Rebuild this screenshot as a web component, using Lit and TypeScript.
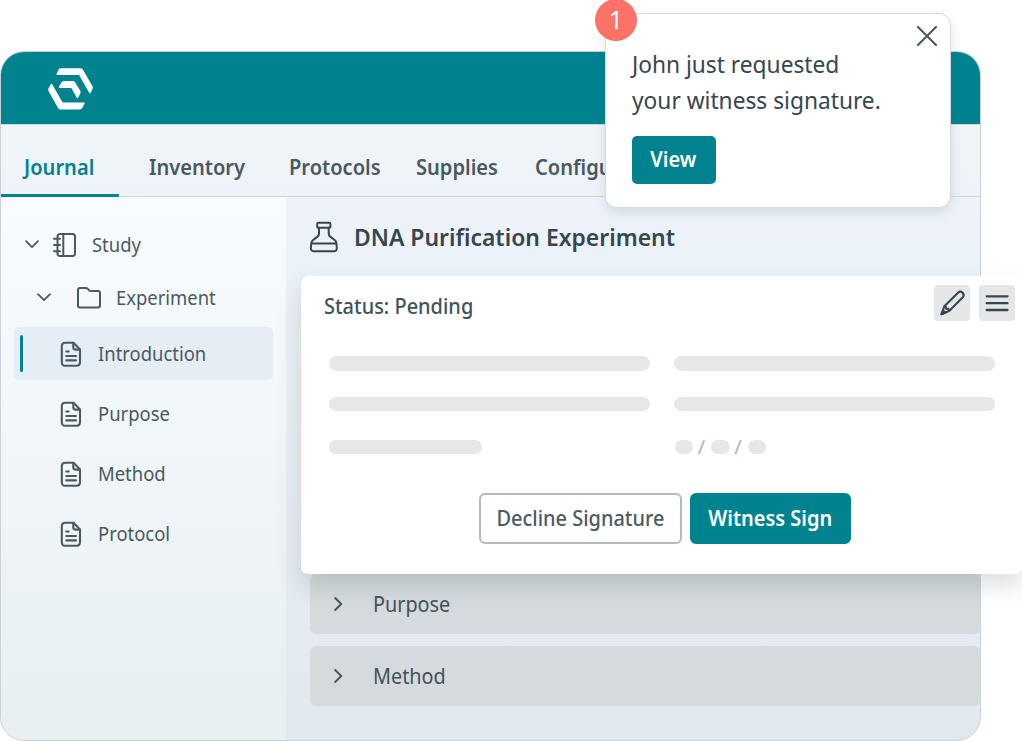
import { css, LitElement, html, svg } from 'lit';
import { customElement, property } from 'lit/decorators.js';
import { classMap } from 'lit/directives/class-map.js';

const icons: Record<string, unknown> = {
  logo: svg`<svg width="45" height="42" viewBox="0 0 45 42" stroke-width="1.6">
    <path d="M9.3 6.2L11.3 2Q11.9 1 13.1 1H32.4Q33.6 1 34.2 2L43.8 18.7Q44.4 19.7 43.8 20.7L42 24.5L31.5 6.2Z"/>
    <path d="M3.5 16.7L1.2 20.7Q.6 21.7 1.2 22.7L10.6 39.4Q11.2 40.7 12.4 40.7H31.8Q33 40.7 33.6 39.7L36 35.2H15.2Q14.1 35.2 13.5 34.2Z"/>
    <path d="M11.6 19.2L14.1 14.9Q14.6 13.8 15.8 13.8H24.8Q26 13.8 26.6 14.8L31.6 23.2Q32.1 24.2 31.6 25.2L29.4 29.4L24.4 20.2Q23.9 19.2 22.8 19.2Z"/>
  </svg>`,
  down: svg`<svg width="14" height="9" viewBox="0 0 14 9"><path d="M1 1.2L7 7.2L13 1.2"/></svg>`,
  right: svg`<svg width="9" height="14" viewBox="0 0 9 14"><path d="M1.2 1L7.2 7L1.2 13"/></svg>`,
  notebook: svg`<svg width="24" height="26" viewBox="0 0 24 26" stroke-width="2">
    <rect x="4.5" y="2" width="17.5" height="22" rx="2.5"/>
    <path d="M10.3 2V24M1 6.8H7M1 13H7M1 19.2H7"/>
  </svg>`,
  folder: svg`<svg width="26" height="24" viewBox="0 0 26 24" stroke-width="2">
    <path d="M2 4Q2 2 4 2H9.8Q11 2 11.6 2.7L13.2 4.4Q13.8 5 14.8 5H22Q24 5 24 7V19.5Q24 21.5 22 21.5H4Q2 21.5 2 19.5Z"/>
  </svg>`,
  file: svg`<svg width="22" height="26" viewBox="0 0 22 26" stroke-width="2.1">
    <path d="M5 1.8H13.5L20 8.4V21Q20 24.8 16.5 24.8H5.3Q1.8 24.8 1.8 21V5.3Q1.8 1.8 5 1.8Z"/>
    <path d="M13.3 1.8V6.6Q13.3 8.6 15.3 8.6H20M6.3 10.5H8.7M6.3 15H16M6.3 19.4H16"/>
  </svg>`,
  flask: svg`<svg width="28" height="32" viewBox="0 0 28 32" stroke-width="2">
    <rect x="7.2" y="1.7" width="13.2" height="5" rx="1"/>
    <path d="M9 6.7V12.5Q9 14.5 7.5 15.6L2.8 19.3Q1.5 20.3 1.3 22L.9 27Q.8 30.2 3.6 30.2H24.1Q26.9 30.2 26.8 27L26.4 22Q26.2 20.3 24.9 19.3L20.2 15.6Q18.7 14.5 18.7 12.5V6.7M1.5 22.6H26.2"/>
  </svg>`,
  pencil: svg`<svg width="36" height="36" viewBox="0 0 36 36" stroke-width="2.1">
    <path d="M7.5 29.2L10.4 21.2L24 7.7Q26.3 5.6 28.6 7.7Q30.8 10.2 28.6 12.5L15.1 26L7.5 29.2ZM10.4 21.2Q12.3 21.2 12.1 23.6Q15 23.6 15.1 26"/>
    <path d="M7.5 29.2L9 25.5L11.3 27.6Z" fill="currentColor"/>
  </svg>`,
  menu: svg`<svg width="36" height="36" viewBox="0 0 36 36" stroke-width="2.3"><path d="M7.7 11.3H28.5M7.7 18.2H28.5M7.7 25H28.5"/></svg>`,
  close: svg`<svg width="22" height="22" viewBox="0 0 22 22" stroke-width="2.2"><path d="M2 2L20 20M20 2L2 20"/></svg>`,
};

@customElement('app-icon')
export class AppIcon extends LitElement {
  @property() name = '';

  static styles = css`
    :host {
      display: block;
      flex: none;
    }
    svg {
      display: block;
      overflow: visible;
      fill: none;
      stroke: currentColor;
      stroke-linecap: round;
      stroke-linejoin: round;
    }
    :host([name='down']) svg,
    :host([name='right']) svg {
      stroke-width: 1.8;
    }
    :host([name='logo']) svg {
      fill: #fff;
      stroke: #fff;
    }
  `;

  render() {
    return html`${icons[this.name]}`;
  }
}

// slightly condensed labels, shared by all elements
const narrow = css`
  .text {
    display: inline-block;
    white-space: nowrap;
    transform: scaleX(0.95);
    transform-origin: left center;
  }
  .button .text {
    transform-origin: center;
  }
`;

@customElement('signature-card')
export class SignatureCard extends LitElement {
  static styles = [
    narrow,
    css`
      :host {
        display: flex;
        flex-direction: column;
        box-sizing: border-box;
        height: 298px;
        padding: 8px 7px 30px 23px;
        background: #fff;
        border-radius: 7px;
        color: #43525a;
        box-shadow: 0 12px 24px rgba(60, 80, 85, 0.18);
      }
      .top {
        display: flex;
        align-items: center;
        gap: 9px;
        height: 37px;
      }
      .status {
        flex: 1;
        font-size: 21px;
        font-weight: 500;
        line-height: 36px;
        padding-top: 6px;
      }
      .tool {
        border-radius: 4px;
        background: #e4e6e8;
        color: #37464e;
      }
      .fields {
        display: grid;
        grid-template-columns: 321px 321px;
        column-gap: 24px;
        grid-template-rows: 15px 14px 14px;
        row-gap: 26px;
        margin: 35px 0 0 5px;
      }
      .bar {
        border-radius: 8px;
        background: #e5e7e9;
      }
      .short {
        width: 153px;
        margin-top: 3px;
        height: 14px;
      }
      .date {
        display: flex;
        align-items: center;
        margin-top: 3px;
        padding-left: 0.5px;
        height: 14px;
      }
      .dot {
        width: 18.5px;
        height: 14px;
        border-radius: 7px;
        background: #e5e7e9;
      }
      .slash {
        width: 18px;
        padding-right: 1px;
        box-sizing: border-box;
        text-align: center;
        font-size: 20px;
        line-height: 14px;
        color: #a9b3b9;
      }
      .actions {
        display: flex;
        gap: 8px;
        margin-top: auto;
        margin-left: 155px;
      }
      .button {
        box-sizing: border-box;
        width: 203px;
        height: 51px;
        border: 2px solid #b1bbc3;
        border-radius: 6px;
        background: #fff;
        color: #4c5b64;
        font: 500 21px/47px 'Noto Sans', sans-serif;
        padding: 0;
      }
      .primary {
        width: 161px;
        border-color: #00838f;
        background: #00838f;
        color: #fff;
        font-weight: 600;
      }
      .primary .text {
        margin-left: -1px;
      }
    `,
  ];

  render() {
    return html`
      <div class="top">
        <div class="status"><span class="text">Status: Pending</span></div>
        <app-icon class="tool" name="pencil"></app-icon>
        <app-icon class="tool" name="menu"></app-icon>
      </div>
      <div class="fields">
        <div class="bar"></div>
        <div class="bar"></div>
        <div class="bar"></div>
        <div class="bar"></div>
        <div class="bar short"></div>
        <div class="date">
          <span class="dot"></span><span class="slash">/</span><span class="dot"></span
          ><span class="slash">/</span><span class="dot"></span>
        </div>
      </div>
      <div class="actions">
        <button class="button"><span class="text">Decline Signature</span></button>
        <button class="button primary"><span class="text">Witness Sign</span></button>
      </div>
    `;
  }
}

@customElement('request-toast')
export class RequestToast extends LitElement {
  static styles = [
    narrow,
    css`
      :host {
        display: block;
        box-sizing: border-box;
        width: 346px;
        height: 194.5px;
        padding: 32px 26px 0;
        border: 1.5px solid #d5dbdf;
        border-radius: 12px;
        background: #fff;
        box-shadow: 0 4px 12px rgba(60, 80, 95, 0.16);
      }
      .badge {
        position: absolute;
        left: -11px;
        top: -15px;
        width: 42px;
        height: 42px;
        border-radius: 50%;
        background: #fa7268;
        color: #fff;
        font-size: 25px;
        line-height: 41px;
        text-align: center;
      }
      .close {
        position: absolute;
        right: 12.5px;
        top: 11px;
        color: #4c5b64;
      }
      .message {
        font-size: 24px;
        line-height: 36px;
        color: #37464e;
      }
      .message .text {
        transform: scaleX(0.947);
      }
      .button {
        display: block;
        width: 84px;
        height: 48px;
        margin-top: 17.5px;
        padding: 0 1px 0 0;
        border: 0;
        border-radius: 5px;
        background: #00838f;
        color: #fff;
        font: 600 21px/47px 'Noto Sans', sans-serif;
      }
    `,
  ];

  render() {
    return html`
      <div class="badge">1</div>
      <app-icon class="close" name="close"></app-icon>
      <div class="message"><span class="text">John just requested<br />your witness signature.</span></div>
      <button class="button"><span class="text">View</span></button>
    `;
  }
}

@customElement('app-root')
export class AppRoot extends LitElement {
  @property() tab = 'Journal';
  @property() page = 'Introduction';

  static styles = [
    narrow,
    css`
      :host {
        display: block;
        position: relative;
        width: 1022px;
        height: 741px;
        overflow: hidden;
        background: #fff;
        font-family: 'Noto Sans', sans-serif;
        color: #4a5960;
      }
      .space {
        height: 51px;
      }
      .window {
        box-sizing: border-box;
        display: flex;
        flex-direction: column;
        width: 981px;
        height: 690px;
        border: 1.5px solid #cbd3d8;
        border-radius: 24px;
        overflow: hidden;
        background: linear-gradient(#f2f6fa, #ebf2f8 30%, #e1e8ef);
      }
      .header {
        box-sizing: border-box;
        flex: none;
        height: 72px;
        padding: 16px 0 0 47px;
        background: #00838f;
      }
      .tabs {
        box-sizing: border-box;
        flex: none;
        display: grid;
        grid-template-columns: 148px 139.5px 127.5px 118.5px auto;
        height: 73px;
        border-top: 1px solid #d3dade;
        border-bottom: 1.5px solid #cfd6da;
        font-size: 21px;
        font-weight: 600;
        line-height: 84px;
      }
      .tab {
        height: 72px;
      }
      .tab .text {
        transform: scaleX(0.956);
      }
      .tab.active {
        box-sizing: border-box;
        width: 118px;
        padding-left: 23px;
        border-bottom: 3px solid #00838f;
        color: #00838f;
      }
      .body {
        flex: 1;
        display: flex;
      }
      .sidebar {
        box-sizing: border-box;
        width: 284.5px;
        padding: 21px 13px 0;
        background: linear-gradient(#f8fcff, #f2f7fa 35%, #e7eff2);
        font-size: 19.5px;
      }
      .sidebar .text {
        transform: scaleX(0.945);
      }
      .row {
        display: flex;
        align-items: center;
        height: 53px;
      }
      .study {
        padding-left: 11px;
      }
      .study .icon {
        margin: 0 15px 0 14px;
      }
      .folder {
        padding-left: 23px;
      }
      .folder .icon {
        margin: 0 14px 0 25px;
      }
      .page {
        box-sizing: border-box;
        margin-bottom: 7px;
        padding-left: 6px;
        border-radius: 5px;
      }
      .page.active {
        background: #e6eef5;
        margin-top: 3px;
      }
      .mark {
        width: 3px;
        height: 37px;
        border-radius: 2px;
      }
      .active .mark {
        background: #00838f;
      }
      .page .icon {
        margin: 0 16px 0 37px;
      }
      .main {
        flex: 1;
        padding-left: 24px;
      }
      .heading {
        display: flex;
        align-items: center;
        gap: 16px;
        height: 79px;
        color: #37464e;
        font-size: 24px;
        font-weight: 600;
      }
      .heading .text {
        transform: scaleX(0.955);
      }
      .section {
        display: flex;
        align-items: center;
        gap: 30px;
        box-sizing: border-box;
        height: 60px;
        margin-bottom: 12px;
        padding-left: 24px;
        border-radius: 6px;
        background: #d4dadd;
        color: #43525a;
        font-size: 21px;
      }
      .section .text {
        transform: scaleX(0.943);
      }
      .sections {
        margin-top: 298px;
      }
      .card {
        position: absolute;
        left: 301px;
        top: 276px;
        width: 721px;
      }
      .toast {
        position: absolute;
        left: 605px;
        top: 13px;
      }
    `,
  ];

  render() {
    const tabs = ['Journal', 'Inventory', 'Protocols', 'Supplies', 'Configuration'];
    const pages = ['Introduction', 'Purpose', 'Method', 'Protocol'];
    return html`
      <div class="space"></div>
      <div class="window">
        <div class="header"><app-icon name="logo"></app-icon></div>
        <div class="tabs">
          ${tabs.map(
            (t) => html`
              <div class=${classMap({ tab: true, active: t === this.tab })} @click=${() => (this.tab = t)}>
                <span class="text">${t}</span>
              </div>
            `
          )}
        </div>
        <div class="body">
          <div class="sidebar">
            <div class="row study">
              <app-icon name="down"></app-icon>
              <app-icon class="icon" name="notebook"></app-icon>
              <span class="text">Study</span>
            </div>
            <div class="row folder">
              <app-icon name="down"></app-icon>
              <app-icon class="icon" name="folder"></app-icon>
              <span class="text">Experiment</span>
            </div>
            ${pages.map(
              (p) => html`
                <div class=${classMap({ row: true, page: true, active: p === this.page })} @click=${() => (this.page = p)}>
                  <div class="mark"></div>
                  <app-icon class="icon" name="file"></app-icon>
                  <span class="text">${p}</span>
                </div>
              `
            )}
          </div>
          <div class="main">
            <div class="heading">
              <app-icon name="flask"></app-icon>
              <span class="text">DNA Purification Experiment</span>
            </div>
            <div class="sections">
              ${['Purpose', 'Method'].map(
                (s) => html`<div class="section"><app-icon name="right"></app-icon><span class="text">${s}</span></div>`
              )}
            </div>
          </div>
        </div>
      </div>
      <signature-card class="card"></signature-card>
      <request-toast class="toast"></request-toast>
    `;
  }
}
